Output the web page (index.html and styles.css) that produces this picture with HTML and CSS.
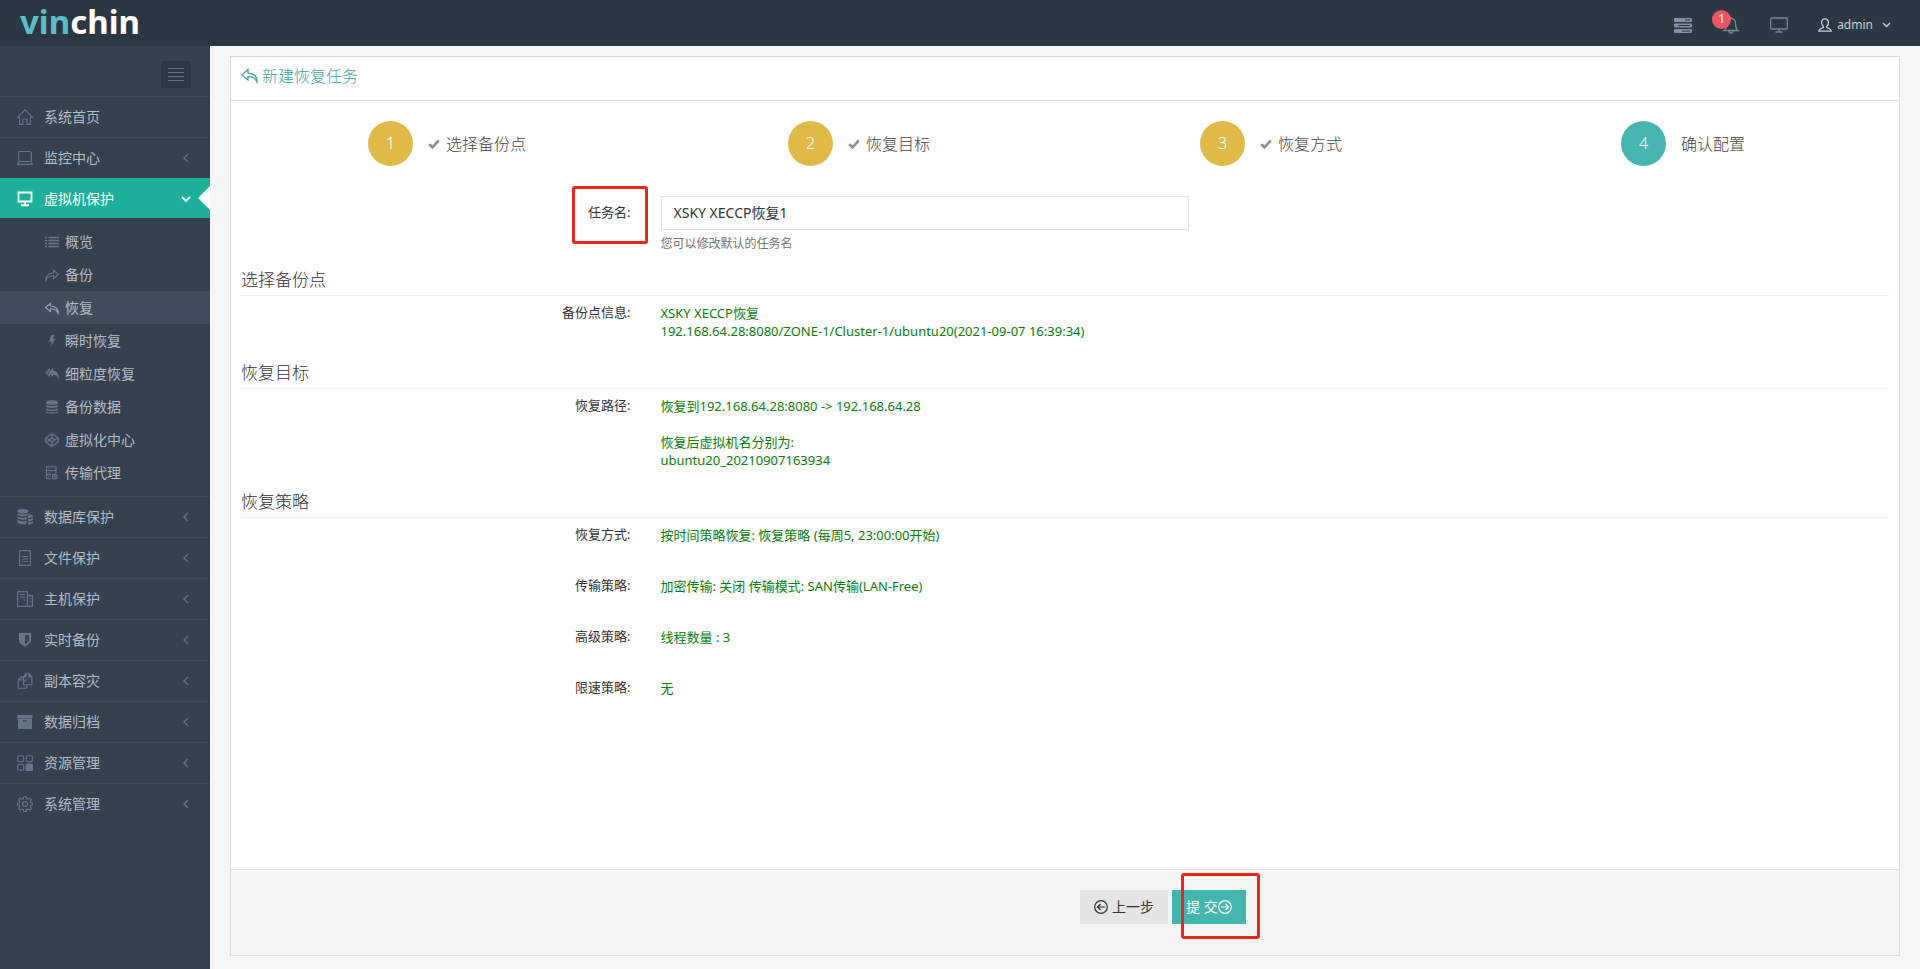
FILE: index.html
```html
<!DOCTYPE html>
<html lang="zh-CN">
<head>
<meta charset="utf-8">
<title>新建恢复任务</title>
<link rel="stylesheet" href="styles.css">
</head>
<body>
<header class="topbar">
  <a class="logo" href="#"><span class="logo-accent">vin</span>chin</a>
  <nav class="tools">
    <button class="tool" type="button" aria-label="任务"><svg width="18" height="15" viewBox="0 0 18 15"><g fill="#8593a5"><rect y="0" width="18" height="4" rx="1"/><rect y="5.500" width="18" height="4" rx="1"/><rect y="11" width="18" height="4" rx="1"/></g><path d="M11 2h5M4 7.500h12M8 13h8" stroke="#2b3742"/></svg></button>
    <button class="tool" type="button" aria-label="通知"><svg width="18" height="18" viewBox="0 0 18 18" fill="none" stroke="#76869a" stroke-width="1.400"><path d="M9 1v1.500M2 14.500c2-1.500 2.500-3 2.500-7C4.500 4 6.500 2.500 9 2.500s4.500 1.500 4.500 5c0 4 .5 5.500 2.500 7zM7 14.700c0 3 4 3 4 0"/></svg><span class="badge">1</span></button>
    <button class="tool" type="button" aria-label="监控"><svg width="18" height="16" viewBox="0 0 18 16" fill="none" stroke="#76869a" stroke-width="1.300"><rect x=".7" y="1" width="16.600" height="11" rx="1"/><path d="M9 12v3M5.500 15h7"/></svg></button>
    <button class="user" type="button"><svg width="14" height="14" viewBox="0 0 14 14" fill="none" stroke="#c6cfda" stroke-width="1.300"><path d="M5.300 8.500C3.700 7 3.400 5 3.600 3.600 3.900 1.700 5.200.8 7 .8s3.100.9 3.400 2.800c.2 1.400-.1 3.400-1.700 4.900v1c1.800.9 4.200 1 4.500 3.600H.8c.3-2.600 2.700-2.700 4.500-3.600z"/></svg>admin<svg class="caret" width="9" height="6" viewBox="0 0 9 6" fill="none" stroke="#c6cfda" stroke-width="1.500"><path d="M1 1l3.500 3.500L8 1"/></svg></button>
  </nav>
</header>
<div class="shell">
  <aside class="sidebar">
    <div class="toggle-row"><button class="toggle" type="button" aria-label="折叠菜单"><svg width="16" height="14" viewBox="0 0 16 14" stroke="#66727f"><path d="M0 .5h16M0 4.500h16M0 8.500h16M0 12.500h16"/></svg></button></div>
    <nav class="menu">
      <a class="item" href="#"><svg class="ico" viewBox="0 0 16 16"><path d="M.6 8.500L8 .8l7.400 7.700h-2v6.900H10V10H6v5.400H2.600V8.500z"/></svg>系统首页</a>
      <a class="item" href="#"><svg class="ico" viewBox="0 0 16 16"><rect x="1.600" y="1.500" width="12.800" height="10" rx="1.500"/><path d="M2 11.500L.6 14.400h14.800L14 11.500"/></svg>监控中心<svg class="arrow" viewBox="0 0 6 10"><path d="M5 1L1 5l4 4"/></svg></a>
      <a class="item active" href="#"><svg class="ico" viewBox="0 0 16 16"><path d="M1.500 1.500h13v9h-13z" stroke-width="1.800"/><path d="M8 11v3M4 14.300h8" stroke-width="2"/></svg>虚拟机保护<svg class="arrow down" viewBox="0 0 10 6"><path d="M1 1l4 4 4-4"/></svg></a>
      <div class="submenu">
        <a class="sub" href="#"><svg class="sico" viewBox="0 0 14 14"><path d="M0 2.500h2M3.500 2.500H14M0 5.500h2M3.500 5.500H14M0 8.500h2M3.500 8.500H14M0 11.500h2M3.500 11.500H14" stroke-width="1.600"/></svg>概览</a>
        <a class="sub" href="#"><svg class="sico" viewBox="0 0 14 14"><path d="M.8 12.500C.5 8 3.500 5 8.500 5V2.200L13.400 6.500 8.500 10.500V7.800C5 7.500 2.500 9 .8 12.500z"/></svg>备份</a>
        <a class="sub current" href="#"><svg class="sico" viewBox="0 0 14 14"><path d="M13.200 12.500C13.500 8 10.500 5 5.500 5V2.200L.6 6.500l4.900 4V7.800c3.500-.3 6 1.200 7.700 4.700z"/></svg>恢复</a>
        <a class="sub" href="#"><svg class="sico solid" viewBox="0 0 14 14"><path d="M6 1h3.500L8 5l2.500-.5L5.500 13 7 7.300 4 8z"/></svg>瞬时恢复</a>
        <a class="sub" href="#"><svg class="sico solid" viewBox="0 0 14 14"><path d="M5 1L0 5.500 5 10V8L2.300 5.500 5 3zM8 1v2.800c4 0 6 3 6 9.200-1.200-3.500-3-5.200-6-5.200V10L3.200 5.500z"/></svg>细粒度恢复</a>
        <a class="sub" href="#"><svg class="sico solid" viewBox="0 0 14 14"><ellipse cx="7" cy="2.500" rx="6" ry="2.300"/><path d="M1 4.500c2 2 10 2 12 0v1.800c-1 2.200-11 2.200-12 0zM1 8c2 2 10 2 12 0v1.500c-1 2.200-11 2.200-12 0zM1 11c2 2 10 2 12 0v1c-1 2.300-11 2.300-12 0z"/></svg>备份数据</a>
        <a class="sub" href="#"><svg class="sico" viewBox="0 0 14 14"><path d="M7 .7l6.300 4v4.600l-6.300 4-6.300-4V4.700zM.7 4.700L7 9l6.300-4.300M.7 9.300L7 5l6.300 4.300M7 .7V5M7 9v4.300"/></svg>虚拟化中心</a>
        <a class="sub" href="#"><svg class="sico" viewBox="0 0 14 14"><path d="M6 12.800H1.500V.8h9.500V7M1.500 4.500H11M1.500 8.500h5M3.500 2.700h1M3.500 6.500h1M3.500 10.500h1"/><circle cx="9.700" cy="10.500" r="2.400"/><circle cx="9.700" cy="10.500" r=".6"/></svg>传输代理</a>
      </div>
      <a class="item" href="#"><svg class="ico solid" viewBox="0 0 16 16"><ellipse cx="6" cy="2.300" rx="5.300" ry="2.200"/><path d="M.5 4c2 2 9 2 11 0v1.600c-1.500 2.200-9.500 2.200-11 0zM.5 7.300c2 2 6.500 2 9 .7v2.300c-2.500.8-7.500.7-9-1.200zM.5 10.800c1.500 1.500 6 2 9 1v3c-3.500 1-8 .5-9-1.200zM12.500 5.500c2 0 3.500.8 3.500 1.800s-2 2-5 1.700V6.800zM11 10c2.500.2 4.500-.3 5-1.300v2c-.5 1-2.500 1.700-5 1.500zM11 13.200c2.500.2 4.500-.3 5-1.300v2c-.5 1-2.500 1.700-5 1.500z"/></svg>数据库保护<svg class="arrow" viewBox="0 0 6 10"><path d="M5 1L1 5l4 4"/></svg></a>
      <a class="item" href="#"><svg class="ico" viewBox="0 0 16 16"><path d="M2.600.6h10.800v14.800H2.600zM5 6.500h6M5 9h6M5 11.500h6"/></svg>文件保护<svg class="arrow" viewBox="0 0 6 10"><path d="M5 1L1 5l4 4"/></svg></a>
      <a class="item" href="#"><svg class="ico" viewBox="0 0 16 16"><path d="M9.500 15.400H.6V.6h9.800v14.800zM10.400 4.600h5v10.800h-5M3 3.500h5M3 6h5M6.500 9h1.500M12.500 7.500h1.500M12.500 10.500h1.500"/></svg>主机保护<svg class="arrow" viewBox="0 0 6 10"><path d="M5 1L1 5l4 4"/></svg></a>
      <a class="item" href="#"><svg class="ico solid" viewBox="0 0 16 16"><path fill-rule="evenodd" d="M2 1h12v7c0 3-3 5-6 6.500C5 13 2 11 2 8zM8 3v9c2-1 4-2.500 4-4.500V3z"/></svg>实时备份<svg class="arrow" viewBox="0 0 6 10"><path d="M5 1L1 5l4 4"/></svg></a>
      <a class="item" href="#"><svg class="ico" viewBox="0 0 16 16"><path d="M6.500 3.500H4.800L1.200 7v8.300h8.600v-3.500M4.800 3.500V7H1.200M9 .7h3l2.900 3.200v7.900H6.500V3.400zM9 .7v2.900H6.500M12 .7v3.200h2.900M9.800 6.500L6.500 9"/></svg>副本容灾<svg class="arrow" viewBox="0 0 6 10"><path d="M5 1L1 5l4 4"/></svg></a>
      <a class="item" href="#"><svg class="ico solid" viewBox="0 0 16 16"><path fill-rule="evenodd" d="M.5 1h15v3H.5zM1 4.600h14V15H1zM6 6.300v1.200h4V6.300z"/></svg>数据归档<svg class="arrow" viewBox="0 0 6 10"><path d="M5 1L1 5l4 4"/></svg></a>
      <a class="item" href="#"><svg class="ico" viewBox="0 0 16 16"><rect x=".7" y=".7" width="6" height="6" rx="1.500"/><rect x="9.300" y=".7" width="6" height="6" rx="1.500"/><rect x=".7" y="9.300" width="6" height="6" rx="1.500"/><rect class="filled" x="9" y="9" width="7" height="7" rx="1.500"/></svg>资源管理<svg class="arrow" viewBox="0 0 6 10"><path d="M5 1L1 5l4 4"/></svg></a>
      <a class="item" href="#"><svg class="ico" viewBox="0 0 16 16"><circle cx="8" cy="8" r="2.400"/><path d="M6.800.7h2.400l.4 2 1.300.6 1.800-1.100 1.600 1.600-1.100 1.800.5 1.300 1.700.4v1.700l-1.700.4-.5 1.300 1.100 1.800-1.600 1.600-1.800-1.100-1.300.5-.4 1.900H6.800l-.4-1.900-1.300-.5-1.800 1.100-1.600-1.600 1.100-1.800-.5-1.300-1.700-.4V7.300l1.700-.4.5-1.300-1.100-1.800 1.600-1.600 1.800 1.100 1.300-.6z"/></svg>系统管理<svg class="arrow" viewBox="0 0 6 10"><path d="M5 1L1 5l4 4"/></svg></a>
    </nav>
  </aside>
  <main class="content">
    <form class="panel">
      <h1 class="panel-title"><svg width="17" height="16" viewBox="0 0 17 16" fill="none" stroke="#3fa595" stroke-width="1.300"><path d="M16 14C16.300 8.500 12.500 5.500 7 5.200V1.500L.9 7 7 12V8.700c4-.3 7 1.300 9 5.300z"/></svg>新建恢复任务</h1>
      <div class="panel-body">
        <ol class="steps">
          <li class="step"><span class="num">1</span><svg class="check" viewBox="0 0 12 10"><path d="M1.200 5.200l3.300 3.100L10.800 1.500"/></svg>选择备份点</li>
          <li class="step"><span class="num">2</span><svg class="check" viewBox="0 0 12 10"><path d="M1.200 5.200l3.300 3.100L10.800 1.500"/></svg>恢复目标</li>
          <li class="step"><span class="num">3</span><svg class="check" viewBox="0 0 12 10"><path d="M1.200 5.200l3.300 3.100L10.800 1.500"/></svg>恢复方式</li>
          <li class="step now"><span class="num">4</span>确认配置</li>
        </ol>
        <div class="row name-row">
          <div class="label"><label class="marked" for="task">任务名:<span class="mark mark-label"></span></label></div>
          <div class="field"><input id="task" class="input" type="text" value="XSKY XECCP恢复1"><p class="help">您可以修改默认的任务名</p></div>
        </div>
        <h2 class="section">选择备份点</h2>
        <div class="row"><div class="label">备份点信息:</div><div class="value">XSKY XECCP恢复<br>192.168.64.28:8080/ZONE-1/Cluster-1/ubuntu20(2021-09-07 16:39:34)</div></div>
        <h2 class="section">恢复目标</h2>
        <div class="row"><div class="label">恢复路径:</div><div class="value">恢复到192.168.64.28:8080 -&gt; 192.168.64.28<br><br>恢复后虚拟机名分别为:<br>ubuntu20_20210907163934</div></div>
        <h2 class="section">恢复策略</h2>
        <div class="row"><div class="label">恢复方式:</div><div class="value">按时间策略恢复: 恢复策略 (每周5, 23:00:00开始)</div></div>
        <div class="row"><div class="label">传输策略:</div><div class="value">加密传输: 关闭 传输模式: SAN传输(LAN-Free)</div></div>
        <div class="row"><div class="label">高级策略:</div><div class="value">线程数量 : 3</div></div>
        <div class="row"><div class="label">限速策略:</div><div class="value">无</div></div>
      </div>
      <div class="actions">
        <button class="btn" type="button"><svg width="14" height="14" viewBox="0 0 14 14" fill="none" stroke="#333" stroke-width="1.200"><circle cx="7" cy="7" r="6.300"/><path d="M11 7H3.500M6.500 4l-3 3 3 3"/></svg>上一步</button>
        <div class="marked"><button class="btn primary" type="submit">提 交<svg width="14" height="14" viewBox="0 0 14 14" fill="none" stroke="#fff" stroke-width="1.200"><circle cx="7" cy="7" r="6.300"/><path d="M3 7h7.500M7.500 4l3 3-3 3"/></svg></button><span class="mark mark-submit"></span></div>
      </div>
    </form>
  </main>
</div>
</body>
</html>
```
FILE: styles.css
```css
* { box-sizing: border-box; }
body {
  margin: 0;
  min-height: 100vh;
  display: flex;
  flex-direction: column;
  background: #f6f6f6;
  color: #333;
  font: 13px/18px "Noto Sans", "Noto Sans CJK SC", sans-serif;
}
button, input { font: inherit; color: inherit; }
button { border: 0; padding: 0; background: none; cursor: pointer; }
a { color: inherit; text-decoration: none; }
svg { display: block; flex: none; }

.topbar {
  height: 46px;
  display: flex;
  justify-content: space-between;
  align-items: center;
  padding: 0 29px 0 20px;
  background: #2b3742;
}
.logo { font-size: 33px; font-weight: 700; line-height: 36px; color: #fff; padding-bottom: 2px; }
.logo-accent { color: #5bbdc8; }
.tools { display: flex; align-items: center; padding-top: 4px; }
.tool { position: relative; width: 18px; margin-right: 30px; }
.badge {
  position: absolute;
  left: -10px;
  top: -6px;
  width: 19px;
  height: 19px;
  border-radius: 50%;
  background: #ef5560;
  color: #fff;
  font-size: 12px;
  line-height: 18px;
}
.user { display: flex; align-items: center; gap: 5px; color: #c6cfda; font-size: 12px; }
.caret { margin-left: 4px; }

.shell { flex: 1; display: flex; }
.sidebar { width: 210px; flex: none; background: #364150; color: #b4bcc8; font-size: 14px; }
.toggle-row { height: 50px; display: flex; justify-content: flex-end; padding: 15px 19px 0 0; }
.toggle { width: 30px; height: 27px; background: #2b3643; display: flex; align-items: center; justify-content: center; }
.item {
  position: relative;
  display: flex;
  align-items: center;
  gap: 11px;
  height: 41px;
  padding: 0 21px 0 17px;
  border-top: 1px solid #3f4b59;
}
.ico { width: 16px; height: 16px; }
.sico { width: 14px; height: 14px; }
.ico, .sico { fill: none; stroke: #67758a; stroke-width: 1.1; }
.solid, .filled { fill: #67758a; }
.solid { stroke: none; }
.arrow { width: 6px; height: 10px; margin-left: auto; fill: none; stroke: #67758a; stroke-width: 1.3; }
.active { height: 40px; padding-right: 19px; background: #1fb09b; border-color: #1fb09b; color: #fff; }
.active .ico, .active .arrow { stroke: #fff; }
.down { width: 10px; height: 6px; stroke-width: 1.8; }
.active::after {
  content: "";
  position: absolute;
  right: 0;
  top: 7px;
  border: 12px solid transparent;
  border-right-color: #fff;
  border-left-width: 0;
}
.submenu { padding: 7px 0; }
.sub { display: flex; align-items: center; gap: 6px; height: 33px; padding-left: 45px; }
.current { background: #3f4c5c; }
.current .sico { stroke: #98a3b3; }

.content { flex: 1; display: flex; padding: 10px 20px 13px; }
.panel { flex: 1; display: flex; flex-direction: column; background: #fff; border: 1px solid #dcdcdc; }
.panel-title {
  display: flex;
  align-items: center;
  gap: 4px;
  height: 44px;
  margin: 0;
  padding: 0 10px 6px;
  border-bottom: 1px solid #dcdcdc;
  color: #3fa595;
  font-size: 16px;
  font-weight: 300;
}
.panel-body { flex: 1; padding: 20px 10px; }
.steps { display: grid; grid-template-columns: repeat(4, 1fr); margin: 0 0 30px; padding: 0; list-style: none; }
.step { display: flex; align-items: center; justify-content: center; font-size: 16px; font-weight: 300; color: #444; }
.num {
  width: 45px;
  height: 45px;
  margin-right: 15px;
  border-radius: 50%;
  background: #dfba49;
  color: #fff;
  line-height: 45px;
  text-align: center;
}
.now .num { background: #45b6af; }
.check { width: 12px; height: 10px; margin-right: 6px; fill: none; stroke: #8b8f92; stroke-width: 2.6; }
.row { display: grid; grid-template-columns: 25% 75%; margin: 0 -15px; padding-bottom: 32px; }
.label { padding-right: 15px; text-align: right; }
.value { padding: 1px 15px 0; color: #0a7d0a; }
.name-row { padding-bottom: 20px; }
.name-row .label { padding-top: 7px; }
.field { padding: 0 15px; }
.input { display: block; width: 43%; height: 34px; padding: 0 12px 2px; border: 1px solid #e3e3e3; background: #fff; font-size: 14px; }
.help { margin: 5px 0 0; color: #737373; font-size: 12px; }
.section { margin: 0 0 7px; padding-bottom: 3px; border-bottom: 1px solid #eee; font-size: 17px; line-height: 24px; font-weight: 300; }
.row + .section { margin-top: -11px; }
.name-row + .section { margin-top: -5px; }
.actions { display: flex; gap: 4px; height: 86px; padding: 20px 0 0 calc(50% + 15px); border-top: 1px solid #dfdfdf; background: #f5f5f5; }
.btn { display: flex; align-items: center; gap: 4px; height: 34px; padding: 0 14px; background: #e5e5e5; font-size: 14px; }
.primary { background: #45b6af; color: #fff; gap: 0; }
.marked { position: relative; }
.mark { position: absolute; border: 3px solid #e8281e; border-radius: 3px; pointer-events: none; }
.mark-label { inset: -17px -17px -23px -16px; }
.mark-submit { left: 9px; top: -17px; width: 79px; height: 66px; }
```
